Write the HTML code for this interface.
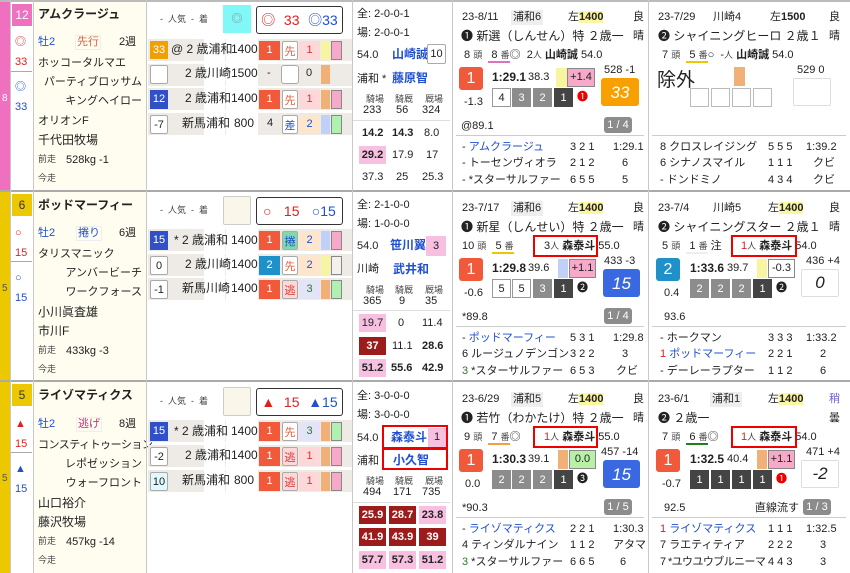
<!DOCTYPE html>
<html><head><meta charset="utf-8"><style>
*{margin:0;padding:0;box-sizing:border-box}
body{width:850px;height:573px;overflow:hidden;background:#fff;font-family:"Liberation Sans","Noto Sans CJK JP",sans-serif;font-size:11px;color:#222;position:relative}
.row{position:absolute;left:0;width:850px;height:190px;overflow:hidden}
.a{position:absolute;white-space:nowrap;line-height:13px}
.b{position:absolute;display:flex;align-items:center;justify-content:center;line-height:1}
.bx{position:absolute;border:1px solid #aaa;border-radius:2px;background:#fff;display:flex;align-items:center;justify-content:center}
.vl{position:absolute;top:0;width:1px;height:190px;background:#c8c8c8}
.sm{font-size:9px;color:#444}
.blue{color:#2050d0}.red{color:#e02020}
.pr{position:absolute;left:148px;width:205px;height:22px;background:linear-gradient(to right,#eeebe6 56px,#fff 56px 77px,#eeebe6 77px 78px,#fff 78px 110px,#eeebe6 110px)}
.res{color:#fff;background:#f05a3a}
.cn{position:absolute;top:88px;width:19px;height:19px;display:flex;align-items:center;justify-content:center;font-size:11px}
.cw{border:1px solid #999;background:#fff}.cg{background:#8c8c8c;color:#fff}.cd{background:#444;color:#fff}
.tag{position:absolute;background:#8c8c8c;color:#fff;border-radius:3px;font-size:11px;width:28px;height:16px;display:flex;align-items:center;justify-content:center}
.hl{background:#fbf6a0}
.rb{position:absolute;border:2px solid #e00}
</style></head><body>

<!-- ============ ROW 1 ============ -->
<div class="row" style="top:0">
<div style="position:absolute;left:0;top:0;width:850px;height:2px;background:#bbb"></div>
<div style="position:absolute;left:0;top:2px;width:10px;height:188px;background:#f070c0"></div>
<div class="a" style="left:2px;top:92px;color:#fff;font-size:10px">8</div>
<div style="position:absolute;left:33px;top:2px;width:113px;height:188px;background:#fefdf0"></div>
<div class="b" style="left:12px;top:4px;width:20px;height:22px;background:#f070c0;color:#fff;font-size:12px">12</div>
<div class="a red" style="left:15px;top:36px">◎</div>
<div class="a red" style="left:15px;top:56px">33</div>
<div style="position:absolute;left:11px;top:71px;width:21px;height:1px;background:#aaa"></div>
<div class="a blue" style="left:15px;top:81px">◎</div>
<div class="a blue" style="left:15px;top:101px">33</div>
<div class="a" style="left:38px;top:8px;font-weight:bold;font-size:12px">アムクラージュ</div>
<div class="a blue" style="left:38px;top:36px">牡2</div>
<div class="a" style="left:75px;top:35px;color:#e06040;border:1px solid #eee;padding:0 1px">先行</div>
<div class="a" style="left:119px;top:36px">2週</div>
<div class="a" style="left:38px;top:57px">ホッコータルマエ</div>
<div class="a" style="right:708px;top:76px">パーティブロッサム</div>
<div class="a" style="right:708px;top:95px">キングヘイロー</div>
<div class="a" style="left:38px;top:115px">オリオンF</div>
<div class="a" style="left:38px;top:134px;font-size:12px">千代田牧場</div>
<div class="a sm" style="left:38px;top:153px">前走</div>
<div class="a" style="left:66px;top:154px">528kg -1</div>
<div class="a sm" style="left:38px;top:172px">今走</div>
<!-- prior -->
<div class="a sm" style="left:160px;top:13px">-&nbsp; 人気 &nbsp;- &nbsp;着</div>
<div class="b" style="left:223px;top:5px;width:28px;height:28px;background:#80f8f8;color:#888">◎</div>
<div class="bx" style="left:256px;top:6px;width:87px;height:28px;border:1.5px solid #333;border-radius:3px;justify-content:space-around;font-size:14px"><span class="red">◎</span><span class="red">33</span><span class="blue">◎33</span></div>
<div class="pr" style="top:39px"></div>
<div class="b" style="left:150px;top:41px;width:18px;height:18px;background:#f0a000;color:#fff">33</div>
<div class="a" style="left:171px;top:43px;font-size:12px">@ 2 歳浦和</div>
<div class="a" style="left:231px;top:43px;font-size:12px">1400</div>
<div class="b res" style="left:259px;top:41px;width:21px;height:19px">1</div>
<div class="bx" style="left:282px;top:41px;width:16px;height:19px;color:#e06040">先</div>
<div class="b" style="left:299px;top:41px;width:21px;height:19px;background:#fdd8d8;color:#e03030">1</div>
<div style="position:absolute;left:321px;top:41px;width:9px;height:19px;background:#f8f4a0"></div>
<div style="position:absolute;left:331px;top:41px;width:11px;height:19px;background:#f8a8c8;border:1px solid #888"></div>
<div class="pr" style="top:64px"></div>
<div class="bx" style="left:150px;top:65px;width:18px;height:19px"></div>
<div class="a" style="left:185px;top:67px;font-size:12px">2 歳川崎</div>
<div class="a" style="left:231px;top:67px;font-size:12px">1500</div>
<div class="a" style="left:267px;top:67px">-</div>
<div class="bx" style="left:281px;top:65px;width:18px;height:19px;border-radius:3px"></div>
<div class="a" style="left:306px;top:67px">0</div>
<div style="position:absolute;left:321px;top:65px;width:9px;height:19px;background:#f0b078"></div>
<div class="pr" style="top:88px"></div>
<div class="b" style="left:150px;top:90px;width:18px;height:19px;background:#3050c8;color:#fff">12</div>
<div class="a" style="left:185px;top:92px;font-size:12px">2 歳浦和</div>
<div class="a" style="left:231px;top:92px;font-size:12px">1400</div>
<div class="b res" style="left:259px;top:90px;width:21px;height:19px">1</div>
<div class="bx" style="left:282px;top:90px;width:16px;height:19px;color:#e06040">先</div>
<div class="b" style="left:299px;top:90px;width:21px;height:19px;background:#fdd8d8;color:#e03030">1</div>
<div style="position:absolute;left:321px;top:90px;width:9px;height:19px;background:#f0b078"></div>
<div style="position:absolute;left:331px;top:90px;width:11px;height:19px;background:#f8a8c8;border:1px solid #888"></div>
<div class="pr" style="top:113px"></div>
<div class="bx" style="left:150px;top:115px;width:18px;height:19px">-7</div>
<div class="a" style="left:182px;top:117px;font-size:12px">新馬浦和</div>
<div class="a" style="left:234px;top:117px;font-size:12px">800</div>
<div class="a" style="left:267px;top:117px">4</div>
<div class="bx" style="left:282px;top:115px;width:16px;height:19px;color:#2050d0">差</div>
<div class="b" style="left:299px;top:115px;width:21px;height:19px;background:#fde6cc;color:#2050d0">2</div>
<div style="position:absolute;left:321px;top:115px;width:9px;height:19px;background:#c0d0f8"></div>
<div style="position:absolute;left:331px;top:115px;width:11px;height:19px;background:#b0f0b0;border:1px solid #888"></div>
<!-- stats -->
<div class="a" style="left:357px;top:8px">全: 2-0-0-1</div>
<div class="a" style="left:357px;top:27px">場: 2-0-0-1</div>
<div class="a" style="left:357px;top:49px">54.0</div>
<div class="a blue" style="left:392px;top:48px;font-weight:bold;font-size:12px">山崎誠</div>
<div class="bx" style="left:427px;top:44px;width:19px;height:20px">10</div>
<div class="a" style="left:357px;top:73px">浦和 *</div>
<div class="a blue" style="left:392px;top:72px;font-weight:bold;font-size:12px">藤原智</div>
<div class="a sm" style="left:366px;top:93px">騎場</div><div class="a sm" style="left:395px;top:93px">騎厩</div><div class="a sm" style="left:425px;top:93px">厩場</div>
<div class="a" style="left:363px;top:104px">233</div><div class="a" style="left:396px;top:104px">56</div><div class="a" style="left:422px;top:104px">324</div>
<div style="position:absolute;left:353px;top:120px;width:97px;height:1px;background:#ddd"></div>
<div class="a" style="left:362px;top:127px;font-weight:bold">14.2</div><div class="a" style="left:392px;top:127px;font-weight:bold">14.3</div><div class="a" style="left:424px;top:127px">8.0</div>
<div class="b" style="left:359px;top:146px;width:27px;height:18px;background:#f8c0e0;font-weight:bold">29.2</div><div class="a" style="left:392px;top:149px">17.9</div><div class="a" style="left:426px;top:149px">17</div>
<div class="a" style="left:362px;top:171px">37.3</div><div class="a" style="left:396px;top:171px">25</div><div class="a" style="left:422px;top:171px">25.3</div>
<!-- race 1 -->
<div class="a" style="left:462px;top:11px">23-8/11</div>
<div class="a" style="left:511px;top:10px;background:#eee;padding:1px 2px">浦和6</div>
<div class="a" style="left:568px;top:11px">左<b class="hl">1400</b></div>
<div class="a" style="left:633px;top:11px">良</div>
<div class="a" style="left:461px;top:30px;font-size:12px">❶ 新選（しんせん）特 ２歳一</div>
<div class="a" style="left:633px;top:30px">晴</div>
<div class="a" style="left:464px;top:49px">8 <span class="sm">頭</span> &nbsp;<span style="border-bottom:2px solid #e070c0">&nbsp;8 <span class="sm">番</span></span>◎ &nbsp;2<span class="sm">人</span> <b>山崎誠</b> 54.0</div>
<div class="b res" style="left:459px;top:67px;width:24px;height:23px;font-size:16px;border-radius:3px">1</div>
<div class="a" style="left:492px;top:71px;font-weight:bold;font-size:12px">1:29.1</div>
<div class="a" style="left:528px;top:71px">38.3</div>
<div style="position:absolute;left:556px;top:68px;width:11px;height:19px;background:#f8f4a0"></div>
<div class="b" style="left:567px;top:68px;width:28px;height:19px;background:#f8a8c8;border:1px solid #888">+1.4</div>
<div class="a" style="left:604px;top:64px">528 -1</div>
<div class="b" style="left:601px;top:78px;width:38px;height:28px;background:#f8a000;color:#fff;font-size:17px;font-style:italic;border-radius:3px">33</div>
<div class="cn cw" style="left:492px">4</div><div class="cn cg" style="left:512px">3</div><div class="cn cg" style="left:533px">2</div><div class="cn cd" style="left:554px">1</div>
<div class="a" style="left:577px;top:91px;color:#e00">❶</div>
<div class="a" style="left:464px;top:96px">-1.3</div>
<div class="a" style="left:461px;top:120px">@89.1</div>
<div class="tag" style="left:604px;top:117px">1 / 4</div>
<div style="position:absolute;left:456px;top:135px;width:188px;height:1px;background:#ccc"></div>
<div class="a" style="left:462px;top:141px">- <span class="blue">アムクラージュ</span></div><div class="a" style="left:570px;top:141px">3 2 1</div><div class="a" style="left:613px;top:141px">1:29.1</div>
<div class="a" style="left:462px;top:157px">- トーセンヴィオラ</div><div class="a" style="left:570px;top:157px">2 1 2</div><div class="a" style="left:622px;top:157px">6</div>
<div class="a" style="left:462px;top:174px">- *スターサルファー</div><div class="a" style="left:570px;top:174px">6 5 5</div><div class="a" style="left:622px;top:174px">5</div>
<!-- race 2 -->
<div class="a" style="left:658px;top:11px">23-7/29</div>
<div class="a" style="left:713px;top:11px">川崎4</div>
<div class="a" style="left:770px;top:11px">左<b>1500</b></div>
<div class="a" style="left:829px;top:11px">良</div>
<div class="a" style="left:658px;top:30px;font-size:12px">❷ シャイニングヒーロ ２歳１</div>
<div class="a" style="left:829px;top:30px">晴</div>
<div class="a" style="left:662px;top:49px">7 <span class="sm">頭</span> &nbsp;<span style="border-bottom:2px solid #e8c800">&nbsp;5 <span class="sm">番</span></span>○ &nbsp;-<span class="sm">人</span> <b>山崎誠</b> 54.0</div>
<div class="a" style="left:657px;top:70px;font-size:19px;line-height:22px">除外</div>
<div style="position:absolute;left:734px;top:67px;width:11px;height:19px;background:#f0b078"></div>
<div class="a" style="left:797px;top:64px">529 0</div>
<div class="bx" style="left:793px;top:78px;width:38px;height:28px;border-color:#ddd"></div>
<div class="cn cw" style="left:690px;border-color:#bbb"></div><div class="cn cw" style="left:711px;border-color:#bbb"></div><div class="cn cw" style="left:732px;border-color:#bbb"></div><div class="cn cw" style="left:753px;border-color:#bbb"></div>
<div style="position:absolute;left:652px;top:135px;width:194px;height:1px;background:#ccc"></div>
<div class="a" style="left:660px;top:141px">8 クロスレイジング</div><div class="a" style="left:768px;top:141px">5 5 5</div><div class="a" style="left:806px;top:141px">1:39.2</div>
<div class="a" style="left:660px;top:157px">6 シナノスマイル</div><div class="a" style="left:768px;top:157px">1 1 1</div><div class="a" style="left:813px;top:157px">クビ</div>
<div class="a" style="left:660px;top:174px">- ドンドミノ</div><div class="a" style="left:768px;top:174px">4 3 4</div><div class="a" style="left:813px;top:174px">クビ</div>
<div class="vl" style="left:10px"></div><div class="vl" style="left:33px"></div><div class="vl" style="left:146px"></div><div class="vl" style="left:352px"></div><div class="vl" style="left:452px"></div><div class="vl" style="left:648px"></div>
</div>

<!-- ============ ROW 2 ============ -->
<div class="row" style="top:190px">
<div style="position:absolute;left:0;top:0;width:850px;height:2px;background:#aaa"></div>
<div style="position:absolute;left:0;top:2px;width:10px;height:188px;background:#ecc800"></div>
<div class="a" style="left:2px;top:92px;font-size:10px;color:#555">5</div>
<div style="position:absolute;left:33px;top:2px;width:113px;height:188px;background:#fefdf0"></div>
<div class="b" style="left:12px;top:4px;width:20px;height:22px;background:#ecc800;color:#333;font-size:12px">6</div>
<div class="a red" style="left:15px;top:37px">○</div>
<div class="a red" style="left:15px;top:57px">15</div>
<div style="position:absolute;left:11px;top:71px;width:21px;height:1px;background:#aaa"></div>
<div class="a blue" style="left:15px;top:82px">○</div>
<div class="a blue" style="left:15px;top:102px">15</div>
<div class="a" style="left:38px;top:9px;font-weight:bold;font-size:12px">ポッドマーフィー</div>
<div class="a blue" style="left:38px;top:37px">牡2</div>
<div class="a" style="left:76px;top:36px;color:#2050d0;border:1px solid #eee;padding:0 1px">捲り</div>
<div class="a" style="left:119px;top:37px">6週</div>
<div class="a" style="left:38px;top:58px">タリスマニック</div>
<div class="a" style="right:708px;top:77px">アンバービーチ</div>
<div class="a" style="right:708px;top:96px">ワークフォース</div>
<div class="a" style="left:38px;top:116px;font-size:12px">小川眞査雄</div>
<div class="a" style="left:38px;top:135px;font-size:12px">市川F</div>
<div class="a sm" style="left:38px;top:154px">前走</div>
<div class="a" style="left:66px;top:155px">433kg -3</div>
<div class="a sm" style="left:38px;top:173px">今走</div>
<div class="a sm" style="left:160px;top:14px">-&nbsp; 人気 &nbsp;- &nbsp;着</div>
<div class="bx" style="left:223px;top:6px;width:28px;height:29px;background:#fbf6ea;border-color:#ccc"></div>
<div class="bx" style="left:256px;top:7px;width:87px;height:28px;border:1.5px solid #333;border-radius:3px;justify-content:space-around;font-size:14px"><span class="red">○</span><span class="red">15</span><span class="blue">○15</span></div>
<div class="pr" style="top:39px"></div>
<div class="b" style="left:150px;top:41px;width:18px;height:19px;background:#3050c8;color:#fff">15</div>
<div class="a" style="left:174px;top:44px;font-size:12px">* 2 歳浦和</div>
<div class="a" style="left:231px;top:44px;font-size:12px">1400</div>
<div class="b res" style="left:259px;top:41px;width:21px;height:19px">1</div>
<div class="bx" style="left:282px;top:41px;width:16px;height:19px;background:#80d8b0;color:#2050d0">捲</div>
<div class="b" style="left:299px;top:41px;width:21px;height:19px;background:#fde6cc;color:#2050d0">2</div>
<div style="position:absolute;left:321px;top:41px;width:9px;height:19px;background:#c0d0f8"></div>
<div style="position:absolute;left:331px;top:41px;width:11px;height:19px;background:#f8a8c8;border:1px solid #888"></div>
<div class="pr" style="top:64px"></div>
<div class="bx" style="left:150px;top:66px;width:18px;height:19px">0</div>
<div class="a" style="left:185px;top:68px;font-size:12px">2 歳川崎</div>
<div class="a" style="left:231px;top:68px;font-size:12px">1400</div>
<div class="b" style="left:259px;top:66px;width:21px;height:19px;background:#2090c8;color:#fff">2</div>
<div class="bx" style="left:282px;top:66px;width:16px;height:19px;color:#e06040">先</div>
<div class="b" style="left:299px;top:66px;width:21px;height:19px;background:#fde6cc;color:#2050d0">2</div>
<div style="position:absolute;left:321px;top:66px;width:9px;height:19px;background:#f8f4a0"></div>
<div style="position:absolute;left:331px;top:66px;width:11px;height:19px;background:#f4f0ec;border:1px solid #888"></div>
<div class="pr" style="top:88px"></div>
<div class="bx" style="left:150px;top:90px;width:18px;height:19px">-1</div>
<div class="a" style="left:182px;top:92px;font-size:12px">新馬川崎</div>
<div class="a" style="left:231px;top:92px;font-size:12px">1400</div>
<div class="b res" style="left:259px;top:90px;width:21px;height:19px">1</div>
<div class="bx" style="left:282px;top:90px;width:16px;height:19px;background:#fdd8d8;color:#e03030">逃</div>
<div class="b" style="left:299px;top:90px;width:21px;height:19px;background:#e4e4f8;color:#2a7a2a">3</div>
<div style="position:absolute;left:321px;top:90px;width:9px;height:19px;background:#f0b078"></div>
<div style="position:absolute;left:331px;top:90px;width:11px;height:19px;background:#b0f0b0;border:1px solid #888"></div>
<div class="a" style="left:357px;top:9px">全: 2-1-0-0</div>
<div class="a" style="left:357px;top:28px">場: 1-0-0-0</div>
<div class="a" style="left:357px;top:50px">54.0</div>
<div class="a blue" style="left:390px;top:49px;font-weight:bold;font-size:12px">笹川翼</div>
<div class="b" style="left:426px;top:46px;width:20px;height:20px;background:#f8c0e0">3</div>
<div class="a" style="left:357px;top:73px">川崎</div>
<div class="a blue" style="left:393px;top:73px;font-weight:bold;font-size:12px">武井和</div>
<div class="a sm" style="left:366px;top:94px">騎場</div><div class="a sm" style="left:395px;top:94px">騎厩</div><div class="a sm" style="left:425px;top:94px">厩場</div>
<div class="a" style="left:363px;top:105px">365</div><div class="a" style="left:399px;top:105px">9</div><div class="a" style="left:425px;top:105px">35</div>
<div style="position:absolute;left:353px;top:120px;width:97px;height:1px;background:#ddd"></div>
<div class="b" style="left:359px;top:124px;width:27px;height:18px;background:#f8c0e0">19.7</div><div class="a" style="left:398px;top:127px">0</div><div class="a" style="left:422px;top:127px">11.4</div>
<div class="b" style="left:359px;top:147px;width:27px;height:18px;background:#9c1c1c;color:#fff;font-weight:bold">37</div><div class="a" style="left:392px;top:150px">11.1</div><div class="a" style="left:422px;top:150px;font-weight:bold">28.6</div>
<div class="b" style="left:359px;top:169px;width:27px;height:18px;background:#f8c0e0;font-weight:bold">51.2</div><div class="a" style="left:391px;top:172px;font-weight:bold">55.6</div><div class="a" style="left:422px;top:172px;font-weight:bold">42.9</div>
<!-- race 1 -->
<div class="a" style="left:462px;top:12px">23-7/17</div>
<div class="a" style="left:511px;top:11px;background:#eee;padding:1px 2px">浦和6</div>
<div class="a" style="left:568px;top:12px">左<b class="hl">1400</b></div>
<div class="a" style="left:633px;top:12px">良</div>
<div class="a" style="left:461px;top:31px;font-size:12px">❶ 新星（しんせい）特 ２歳一</div>
<div class="a" style="left:633px;top:31px">晴</div>
<div class="a" style="left:462px;top:50px">10 <span class="sm">頭</span> &nbsp;<span style="border-bottom:2px solid #e8c800">&nbsp;5 <span class="sm">番</span></span></div>
<div class="a" style="left:544px;top:50px">3<span class="sm">人</span> <b>森泰斗</b> 55.0</div>
<div class="rb" style="left:533px;top:45px;width:65px;height:22px"></div>
<div class="b res" style="left:459px;top:68px;width:24px;height:23px;font-size:16px;border-radius:3px">1</div>
<div class="a" style="left:492px;top:72px;font-weight:bold;font-size:12px">1:29.8</div>
<div class="a" style="left:528px;top:72px">39.6</div>
<div style="position:absolute;left:558px;top:69px;width:10px;height:19px;background:#c0d0f8"></div>
<div class="b" style="left:569px;top:69px;width:27px;height:19px;background:#f8a8c8;border:1px solid #888">+1.1</div>
<div class="a" style="left:604px;top:65px">433 -3</div>
<div class="b" style="left:603px;top:79px;width:37px;height:28px;background:#3a68e0;color:#fff;font-size:17px;font-style:italic;border-radius:3px">15</div>
<div class="cn cw" style="left:492px;top:89px">5</div><div class="cn cw" style="left:512px;top:89px">5</div><div class="cn cg" style="left:533px;top:89px">3</div><div class="cn cd" style="left:554px;top:89px">1</div>
<div class="a" style="left:577px;top:92px">❷</div>
<div class="a" style="left:464px;top:97px">-0.6</div>
<div class="a" style="left:462px;top:121px">*89.8</div>
<div class="tag" style="left:604px;top:118px">1 / 4</div>
<div style="position:absolute;left:456px;top:136px;width:188px;height:1px;background:#ccc"></div>
<div class="a" style="left:462px;top:142px">- <span class="blue">ポッドマーフィー</span></div><div class="a" style="left:570px;top:142px">5 3 1</div><div class="a" style="left:613px;top:142px">1:29.8</div>
<div class="a" style="left:462px;top:158px">6 ルージュノデンゴン</div><div class="a" style="left:570px;top:158px">3 2 2</div><div class="a" style="left:622px;top:158px">3</div>
<div class="a" style="left:462px;top:175px"><span style="color:#2a7a2a">3</span> *スターサルファー</div><div class="a" style="left:570px;top:175px">6 5 3</div><div class="a" style="left:616px;top:175px">クビ</div>
<!-- race 2 -->
<div class="a" style="left:658px;top:12px">23-7/4</div>
<div class="a" style="left:713px;top:12px">川崎5</div>
<div class="a" style="left:768px;top:12px">左<b class="hl">1400</b></div>
<div class="a" style="left:829px;top:12px">良</div>
<div class="a" style="left:658px;top:31px;font-size:12px">❷ シャイニングスター ２歳１</div>
<div class="a" style="left:829px;top:31px">晴</div>
<div class="a" style="left:662px;top:50px">5 <span class="sm">頭</span> &nbsp;<span style="border-bottom:2px solid #eee">&nbsp;1 <span class="sm">番</span></span> 注</div>
<div class="a" style="left:741px;top:50px"><span class="red">1</span><span class="sm">人</span> <b>森泰斗</b> 54.0</div>
<div class="rb" style="left:731px;top:45px;width:66px;height:22px"></div>
<div class="b" style="left:656px;top:68px;width:24px;height:23px;font-size:16px;border-radius:3px;background:#2090c8;color:#fff">2</div>
<div class="a" style="left:690px;top:72px;font-weight:bold;font-size:12px">1:33.6</div>
<div class="a" style="left:727px;top:72px">39.7</div>
<div style="position:absolute;left:757px;top:69px;width:10px;height:19px;background:#f8f4a0"></div>
<div class="b" style="left:768px;top:69px;width:27px;height:19px;border:1px solid #888">-0.3</div>
<div class="a" style="left:806px;top:65px">436 +4</div>
<div class="bx" style="left:801px;top:79px;width:38px;height:28px;border-color:#ddd;font-size:17px;font-style:italic">0</div>
<div class="cn cg" style="left:690px;top:89px">2</div><div class="cn cg" style="left:711px;top:89px">2</div><div class="cn cg" style="left:732px;top:89px">2</div><div class="cn cd" style="left:753px;top:89px">1</div>
<div class="a" style="left:776px;top:92px">❷</div>
<div class="a" style="left:664px;top:97px">0.4</div>
<div class="a" style="left:664px;top:121px">93.6</div>
<div style="position:absolute;left:652px;top:136px;width:194px;height:1px;background:#ccc"></div>
<div class="a" style="left:660px;top:142px">- ホークマン</div><div class="a" style="left:768px;top:142px">3 3 3</div><div class="a" style="left:806px;top:142px">1:33.2</div>
<div class="a" style="left:660px;top:158px"><span class="red">1</span> <span class="blue">ポッドマーフィー</span></div><div class="a" style="left:768px;top:158px">2 2 1</div><div class="a" style="left:820px;top:158px">2</div>
<div class="a" style="left:660px;top:175px">- デーレーラプター</div><div class="a" style="left:768px;top:175px">1 1 2</div><div class="a" style="left:820px;top:175px">6</div>
<div class="vl" style="left:10px"></div><div class="vl" style="left:33px"></div><div class="vl" style="left:146px"></div><div class="vl" style="left:352px"></div><div class="vl" style="left:452px"></div><div class="vl" style="left:648px"></div>
</div>

<!-- ============ ROW 3 ============ -->
<div class="row" style="top:380px;height:193px">
<div style="position:absolute;left:0;top:0;width:850px;height:2px;background:#aaa"></div>
<div style="position:absolute;left:0;top:2px;width:10px;height:191px;background:#ecc800"></div>
<div class="a" style="left:2px;top:92px;font-size:10px;color:#555">5</div>
<div style="position:absolute;left:33px;top:2px;width:113px;height:191px;background:#fefdf0"></div>
<div class="b" style="left:12px;top:4px;width:20px;height:22px;background:#ecc800;color:#333;font-size:12px">5</div>
<div class="a red" style="left:15px;top:38px">▲</div>
<div class="a red" style="left:15px;top:58px">15</div>
<div style="position:absolute;left:11px;top:72px;width:21px;height:1px;background:#aaa"></div>
<div class="a blue" style="left:15px;top:83px">▲</div>
<div class="a blue" style="left:15px;top:103px">15</div>
<div class="a" style="left:38px;top:9px;font-weight:bold;font-size:12px">ライゾマティクス</div>
<div class="a blue" style="left:38px;top:38px">牡2</div>
<div class="a" style="left:76px;top:37px;color:#c03080;border:1px solid #eee;padding:0 1px">逃げ</div>
<div class="a" style="left:119px;top:38px">8週</div>
<div class="a" style="left:38px;top:59px;letter-spacing:-0.5px">コンスティトゥーション</div>
<div class="a" style="right:708px;top:78px">レポゼッション</div>
<div class="a" style="right:708px;top:97px">ウォーフロント</div>
<div class="a" style="left:38px;top:117px;font-size:12px">山口裕介</div>
<div class="a" style="left:38px;top:136px;font-size:12px">藤沢牧場</div>
<div class="a sm" style="left:38px;top:155px">前走</div>
<div class="a" style="left:66px;top:156px">457kg -14</div>
<div class="a sm" style="left:38px;top:174px">今走</div>
<div class="a sm" style="left:160px;top:15px">-&nbsp; 人気 &nbsp;- &nbsp;着</div>
<div class="bx" style="left:223px;top:7px;width:28px;height:29px;background:#fbf6ea;border-color:#ccc"></div>
<div class="bx" style="left:256px;top:8px;width:87px;height:28px;border:1.5px solid #333;border-radius:3px;justify-content:space-around;font-size:14px"><span class="red">▲</span><span class="red">15</span><span class="blue">▲15</span></div>
<div class="pr" style="top:40px"></div>
<div class="b" style="left:150px;top:42px;width:18px;height:19px;background:#3050c8;color:#fff">15</div>
<div class="a" style="left:174px;top:45px;font-size:12px">* 2 歳浦和</div>
<div class="a" style="left:231px;top:45px;font-size:12px">1400</div>
<div class="b res" style="left:259px;top:42px;width:21px;height:19px">1</div>
<div class="bx" style="left:282px;top:42px;width:16px;height:19px;color:#e06040">先</div>
<div class="b" style="left:299px;top:42px;width:21px;height:19px;background:#e4e4f8;color:#2a7a2a">3</div>
<div style="position:absolute;left:321px;top:42px;width:9px;height:19px;background:#f0b078"></div>
<div style="position:absolute;left:331px;top:42px;width:11px;height:19px;background:#b0f0b0;border:1px solid #888"></div>
<div class="pr" style="top:65px"></div>
<div class="bx" style="left:150px;top:67px;width:18px;height:19px">-2</div>
<div class="a" style="left:185px;top:69px;font-size:12px">2 歳浦和</div>
<div class="a" style="left:231px;top:69px;font-size:12px">1400</div>
<div class="b res" style="left:259px;top:67px;width:21px;height:19px">1</div>
<div class="bx" style="left:282px;top:67px;width:16px;height:19px;background:#fdd8d8;color:#e03030">逃</div>
<div class="b" style="left:299px;top:67px;width:21px;height:19px;background:#fdd8d8;color:#e03030">1</div>
<div style="position:absolute;left:321px;top:67px;width:9px;height:19px;background:#f0b078"></div>
<div style="position:absolute;left:331px;top:67px;width:11px;height:19px;background:#f8a8c8;border:1px solid #888"></div>
<div class="pr" style="top:90px"></div>
<div class="bx" style="left:150px;top:92px;width:18px;height:19px;background:#e0f8ff">10</div>
<div class="a" style="left:182px;top:94px;font-size:12px">新馬浦和</div>
<div class="a" style="left:234px;top:94px;font-size:12px">800</div>
<div class="b res" style="left:259px;top:92px;width:21px;height:19px">1</div>
<div class="bx" style="left:282px;top:92px;width:16px;height:19px;background:#fdd8d8;color:#e03030">逃</div>
<div class="b" style="left:299px;top:92px;width:21px;height:19px;background:#fdd8d8;color:#e03030">1</div>
<div style="position:absolute;left:321px;top:92px;width:9px;height:19px;background:#f0b078"></div>
<div style="position:absolute;left:331px;top:92px;width:11px;height:19px;background:#f8a8c8;border:1px solid #888"></div>
<div class="a" style="left:357px;top:10px">全: 3-0-0-0</div>
<div class="a" style="left:357px;top:29px">場: 3-0-0-0</div>
<div class="a" style="left:357px;top:52px">54.0</div>
<div class="rb" style="left:382px;top:45px;width:66px;height:24px"></div>
<div class="a blue" style="left:391px;top:51px;font-weight:bold;font-size:12px">森泰斗</div>
<div class="b" style="left:428px;top:48px;width:18px;height:19px;background:#f8c0e0">1</div>
<div class="a" style="left:357px;top:75px">浦和</div>
<div class="rb" style="left:382px;top:68px;width:66px;height:22px"></div>
<div class="a blue" style="left:393px;top:74px;font-weight:bold;font-size:12px">小久智</div>
<div class="a sm" style="left:366px;top:95px">騎場</div><div class="a sm" style="left:395px;top:95px">騎厩</div><div class="a sm" style="left:425px;top:95px">厩場</div>
<div class="a" style="left:363px;top:106px">494</div><div class="a" style="left:393px;top:106px">171</div><div class="a" style="left:422px;top:106px">735</div>
<div style="position:absolute;left:353px;top:122px;width:97px;height:1px;background:#ddd"></div>
<div class="b" style="left:359px;top:126px;width:27px;height:18px;background:#9c1c1c;color:#fff;font-weight:bold">25.9</div><div class="b" style="left:389px;top:126px;width:27px;height:18px;background:#9c1c1c;color:#fff;font-weight:bold">28.7</div><div class="b" style="left:419px;top:126px;width:27px;height:18px;background:#f8c0e0;font-weight:bold">23.8</div>
<div class="b" style="left:359px;top:148px;width:27px;height:18px;background:#9c1c1c;color:#fff;font-weight:bold">41.9</div><div class="b" style="left:389px;top:148px;width:27px;height:18px;background:#9c1c1c;color:#fff;font-weight:bold">43.9</div><div class="b" style="left:419px;top:148px;width:27px;height:18px;background:#9c1c1c;color:#fff;font-weight:bold">39</div>
<div class="b" style="left:359px;top:171px;width:27px;height:18px;background:#f8c0e0;font-weight:bold">57.7</div><div class="b" style="left:389px;top:171px;width:27px;height:18px;background:#f8c0e0;font-weight:bold">57.3</div><div class="b" style="left:419px;top:171px;width:27px;height:18px;background:#f8c0e0;font-weight:bold">51.2</div>
<!-- race 1 -->
<div class="a" style="left:462px;top:13px">23-6/29</div>
<div class="a" style="left:511px;top:12px;background:#eee;padding:1px 2px">浦和5</div>
<div class="a" style="left:568px;top:13px">左<b class="hl">1400</b></div>
<div class="a" style="left:633px;top:13px">良</div>
<div class="a" style="left:461px;top:32px;font-size:12px">❶ 若竹（わかたけ）特 ２歳一</div>
<div class="a" style="left:633px;top:32px">晴</div>
<div class="a" style="left:464px;top:51px">9 <span class="sm">頭</span> &nbsp;<span style="border-bottom:2px solid #f0a040">&nbsp;7 <span class="sm">番</span></span>◎</div>
<div class="a" style="left:544px;top:51px"><span class="red">1</span><span class="sm">人</span> <b>森泰斗</b> 55.0</div>
<div class="rb" style="left:533px;top:46px;width:65px;height:22px"></div>
<div class="b res" style="left:459px;top:69px;width:24px;height:23px;font-size:16px;border-radius:3px">1</div>
<div class="a" style="left:492px;top:73px;font-weight:bold;font-size:12px">1:30.3</div>
<div class="a" style="left:528px;top:73px">39.1</div>
<div style="position:absolute;left:558px;top:70px;width:10px;height:19px;background:#f0b078"></div>
<div class="b" style="left:569px;top:70px;width:27px;height:19px;background:#b8f0a8;border:1px solid #888">0.0</div>
<div class="a" style="left:601px;top:66px">457 -14</div>
<div class="b" style="left:603px;top:80px;width:37px;height:28px;background:#3a68e0;color:#fff;font-size:17px;font-style:italic;border-radius:3px">15</div>
<div class="cn cg" style="left:492px;top:90px">2</div><div class="cn cg" style="left:512px;top:90px">2</div><div class="cn cg" style="left:533px;top:90px">2</div><div class="cn cd" style="left:554px;top:90px">1</div>
<div class="a" style="left:577px;top:93px">❸</div>
<div class="a" style="left:465px;top:98px">0.0</div>
<div class="a" style="left:462px;top:122px">*90.3</div>
<div class="tag" style="left:604px;top:119px">1 / 5</div>
<div style="position:absolute;left:456px;top:137px;width:188px;height:1px;background:#ccc"></div>
<div class="a" style="left:462px;top:143px">- <span class="blue">ライゾマティクス</span></div><div class="a" style="left:570px;top:143px">2 2 1</div><div class="a" style="left:613px;top:143px">1:30.3</div>
<div class="a" style="left:462px;top:159px">4 ティンダルナイン</div><div class="a" style="left:570px;top:159px">1 1 2</div><div class="a" style="left:613px;top:159px">アタマ</div>
<div class="a" style="left:462px;top:176px"><span style="color:#2a7a2a">3</span> *スターサルファー</div><div class="a" style="left:570px;top:176px">6 6 5</div><div class="a" style="left:620px;top:176px">6</div>
<!-- race 2 -->
<div class="a" style="left:658px;top:13px">23-6/1</div>
<div class="a" style="left:710px;top:12px;background:#eee;padding:1px 2px">浦和1</div>
<div class="a" style="left:768px;top:13px">左<b class="hl">1400</b></div>
<div class="a" style="left:829px;top:13px;color:#7060d0">稍</div>
<div class="a" style="left:658px;top:32px;font-size:12px">❷ ２歳一</div>
<div class="a" style="left:829px;top:32px">曇</div>
<div class="a" style="left:662px;top:51px">7 <span class="sm">頭</span> &nbsp;<span style="border-bottom:2px solid #208020">&nbsp;6 <span class="sm">番</span></span>◎</div>
<div class="a" style="left:741px;top:51px"><span class="red">1</span><span class="sm">人</span> <b>森泰斗</b> 54.0</div>
<div class="rb" style="left:731px;top:46px;width:66px;height:22px"></div>
<div class="b res" style="left:656px;top:69px;width:24px;height:23px;font-size:16px;border-radius:3px">1</div>
<div class="a" style="left:690px;top:73px;font-weight:bold;font-size:12px">1:32.5</div>
<div class="a" style="left:727px;top:73px">40.4</div>
<div style="position:absolute;left:757px;top:70px;width:10px;height:19px;background:#f0b078"></div>
<div class="b" style="left:768px;top:70px;width:27px;height:19px;background:#f8a8c8;border:1px solid #888">+1.1</div>
<div class="a" style="left:806px;top:66px">471 +4</div>
<div class="bx" style="left:801px;top:80px;width:38px;height:28px;border-color:#ddd;font-size:17px;font-style:italic">-2</div>
<div class="cn cd" style="left:690px;top:90px">1</div><div class="cn cd" style="left:711px;top:90px">1</div><div class="cn cd" style="left:732px;top:90px">1</div><div class="cn cd" style="left:753px;top:90px">1</div>
<div class="a" style="left:776px;top:93px;color:#e00">❶</div>
<div class="a" style="left:662px;top:98px">-0.7</div>
<div class="a" style="left:664px;top:122px">92.5</div>
<div class="a" style="left:755px;top:122px">直線流す</div>
<div class="tag" style="left:803px;top:119px">1 / 3</div>
<div style="position:absolute;left:652px;top:137px;width:194px;height:1px;background:#ccc"></div>
<div class="a" style="left:660px;top:143px"><span class="red">1</span> <span class="blue">ライゾマティクス</span></div><div class="a" style="left:768px;top:143px">1 1 1</div><div class="a" style="left:806px;top:143px">1:32.5</div>
<div class="a" style="left:660px;top:159px">7 ラエティティア</div><div class="a" style="left:768px;top:159px">2 2 2</div><div class="a" style="left:820px;top:159px">3</div>
<div class="a" style="left:660px;top:176px;letter-spacing:-0.6px">7 *ユウユウブルニーマ</div><div class="a" style="left:768px;top:176px;background:#fff">4 4 3</div><div class="a" style="left:820px;top:176px">3</div>
<div class="vl" style="left:10px;height:193px"></div><div class="vl" style="left:33px;height:193px"></div><div class="vl" style="left:146px;height:193px"></div><div class="vl" style="left:352px;height:193px"></div><div class="vl" style="left:452px;height:193px"></div><div class="vl" style="left:648px;height:193px"></div>
</div>
</body></html>
